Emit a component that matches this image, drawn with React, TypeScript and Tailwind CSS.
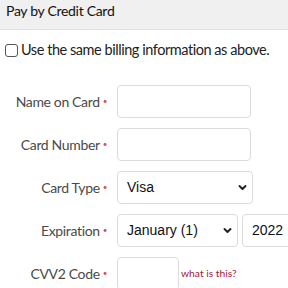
import React from 'react';

const labelFont = { fontFamily: 'Lato, "Open Sans", sans-serif' };

function Label({ children }: { children: React.ReactNode }) {
  return (
    <div className="w-[117px] shrink-0 flex items-center justify-end pr-[10px] text-[14px] tracking-[-0.35px] text-[#4a4a4a] whitespace-nowrap">
      <span>{children}</span>
      <span className="ml-[3px] text-[8px] text-[#d9534f] relative top-[-1px]">•</span>
    </div>
  );
}

function Chevron() {
  return (
    <svg className="w-[9px] h-[9px] text-[#222]" viewBox="0 0 12 12" fill="none">
      <path d="M2 4l4 4 4-4" stroke="currentColor" strokeWidth="2.6" strokeLinecap="round" strokeLinejoin="round" />
    </svg>
  );
}

function SelectBox({ value, className }: { value: string; className: string }) {
  return (
    <div
      className={`h-[33px] shrink-0 flex items-center justify-between pl-[9px] pr-[5px] rounded-[4px] border border-[#dcdcdc] bg-white text-[14px] text-[#111] ${className}`}
      style={{ fontFamily: '"Liberation Sans", Arial, sans-serif' }}
    >
      <span>{value}</span>
      <Chevron />
    </div>
  );
}

export default function App() {
  return (
    <div className="w-[288px] h-[288px] overflow-hidden bg-white" style={labelFont}>
      {/* Header */}
      <div className="h-[30px] bg-[#f0f0f0] border-b border-[#dedede] px-[6px] pt-[1px]">
        <h2 className="text-[14px] leading-[20px] tracking-[-0.3px] text-[#111]">Pay by Credit Card</h2>
      </div>

      {/* Same billing */}
      <label className="flex items-center mt-[10px] pl-[5px] h-[20px] text-[14.5px] tracking-[-0.45px] text-[#222] whitespace-nowrap">
        <span className="w-[13px] h-[13px] shrink-0 border border-[#555] rounded-[3px] mr-[3px] bg-white" />
        Use the same billing information as above.
      </label>

      <div className="mt-[25px] flex flex-col gap-[10px]">
        <div className="flex h-[33px]">
          <Label>Name on Card</Label>
          <div className="w-[134px] h-[33px] rounded-[4px] border border-[#dcdcdc] bg-white" />
        </div>
        <div className="flex h-[33px]">
          <Label>Card Number</Label>
          <div className="w-[134px] h-[33px] rounded-[4px] border border-[#dcdcdc] bg-white" />
        </div>
        <div className="flex h-[33px]">
          <Label>Card Type</Label>
          <SelectBox value="Visa" className="w-[136px]" />
        </div>
        <div className="flex h-[33px] gap-[4px]">
          <Label>Expiration</Label>
          <SelectBox value="January (1)" className="w-[121px] -ml-[4px]" />
          <SelectBox value="2022" className="w-[80px]" />
        </div>
        <div className="flex h-[33px] items-center">
          <Label>CVV2 Code</Label>
          <div className="w-[62px] h-[33px] rounded-[4px] border border-[#dcdcdc] bg-white" />
          <a className="ml-[2px] text-[10.3px] text-[#a0203a]">what is this?</a>
        </div>
      </div>
    </div>
  );
}
